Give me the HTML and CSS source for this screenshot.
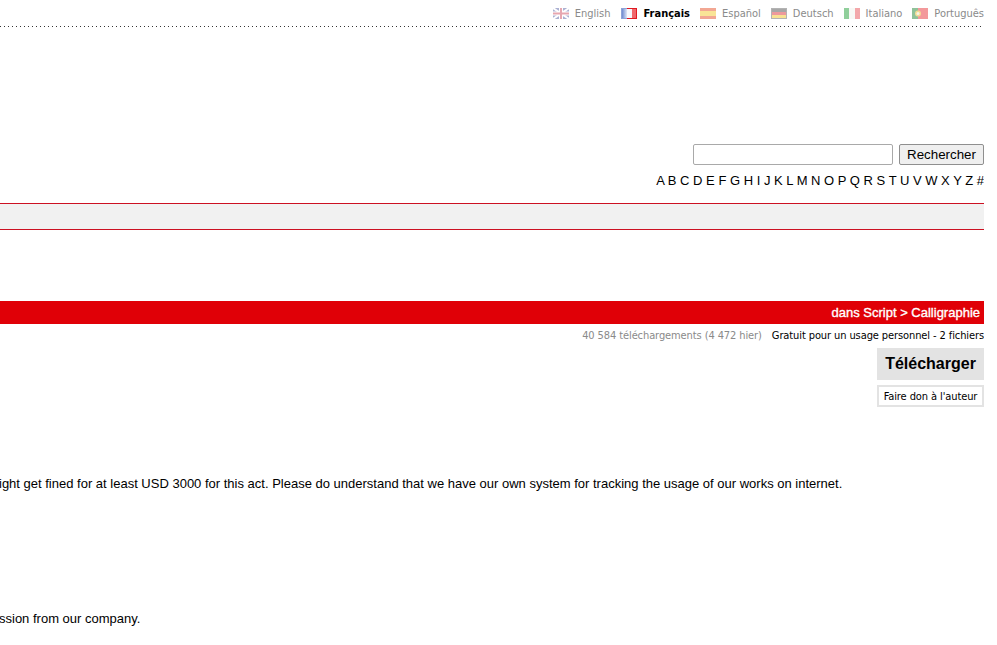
FILE: index.html
```html
<!DOCTYPE html>
<html lang="fr">
<head>
<meta charset="utf-8">
<title>Calligraphie</title>
<link rel="stylesheet" href="styles.css">
</head>
<body>
<div class="page">
  <nav class="langs">
    <a class="lang"><svg class="flag dim" viewBox="0 0 16 11"><rect width="16" height="11" fill="#8f97c4"/><path d="M0 0L16 11M16 0L0 11" stroke="#fff" stroke-width="2"/><path d="M8 0V11M0 5.500H16" stroke="#fff" stroke-width="4"/><path d="M8 0V11M0 5.500H16" stroke="#e08a96" stroke-width="2"/></svg>English</a>
    <a class="lang current"><svg class="flag" viewBox="0 0 16 11"><defs><linearGradient id="fr-blue" x1="0" x2="1" y1="0" y2="0"><stop offset="0" stop-color="#6f8ad0"/><stop offset="1" stop-color="#dfe6f6"/></linearGradient></defs><rect width="16" height="11" fill="#e01a22"/><rect width="6" height="11" fill="#8fa3d8"/><rect x="1" y="1" width="5" height="9" fill="url(#fr-blue)"/><rect x="6" y="1" width="5" height="9" fill="#f7f8fc"/><rect x="11" y="1" width="4" height="9" fill="#f0686c"/></svg>Français</a>
    <a class="lang"><svg class="flag dim" viewBox="0 0 16 11"><rect width="16" height="11" fill="#ee8a70"/><rect y="3" width="16" height="5" fill="#f8dc74"/></svg>Español</a>
    <a class="lang"><svg class="flag dim" viewBox="0 0 16 11"><rect width="16" height="11" fill="#9a9a9a"/><rect x="1" y="1" width="14" height="3" fill="#8a8a8a"/><rect x="1" y="4" width="14" height="3" fill="#e8787c"/><rect x="1" y="7" width="14" height="3" fill="#f6d86e"/></svg>Deutsch</a>
    <a class="lang"><svg class="flag dim" viewBox="0 0 16 11"><rect width="6" height="11" fill="#6cc07a"/><rect x="5" width="6" height="11" fill="#f6f6f2"/><rect x="11" width="5" height="11" fill="#f08a8e"/></svg>Italiano</a>
    <a class="lang"><svg class="flag dim" viewBox="0 0 16 11"><rect width="16" height="11" fill="#f0787a"/><rect width="6" height="11" fill="#6cae78"/><circle cx="6" cy="5.500" r="3" fill="#f0d070"/><circle cx="6" cy="5.500" r="1.500" fill="#f4f0e0"/></svg>Português</a>
  </nav>
  <div class="search">
    <input class="search-input" type="text" aria-label="Rechercher">
    <button class="search-button" type="button">Rechercher</button>
  </div>
  <div class="alpha">A B C D E F G H I J K L M N O P Q R S T U V W X Y Z #</div>
  <div class="band"></div>
  <div class="titlebar">dans Script &gt; Calligraphie</div>
  <div class="stats"><span class="count">40 584 téléchargements (4 472 hier)</span><span>Gratuit pour un usage personnel - 2 fichiers</span></div>
  <div class="actions">
    <a class="download">Télécharger</a>
    <a class="donate">Faire don à l'auteur</a>
  </div>
  <p class="note first">ight get fined for at least USD 3000 for this act. Please do understand that we have our own system for tracking the usage of our works on internet.</p>
  <p class="note second">ssion from our company.</p>
</div>
</body>
</html>
```
FILE: styles.css
```css
html, body { margin: 0; padding: 0; background: #fff; }
body { overflow: hidden; height: 645px; }
.page {
  width: 984px;
  height: 645px;
  overflow: hidden;
  display: flex;
  flex-direction: column;
  font-family: "Liberation Sans", Arial, sans-serif;
  color: #000;
}
.langs {
  display: flex;
  justify-content: flex-end;
  align-items: center;
  gap: 10px;
  height: 27px;
  padding-bottom: 1px;
  box-sizing: border-box;
  background: linear-gradient(to right, #333 1px, transparent 1px) left 26px / 4px 1px repeat-x;
  font-family: "DejaVu Sans Condensed", "Noto Sans", sans-serif;
  font-stretch: condensed;
  font-size: 11px;
  color: #8a8a8a;
}
.lang { display: flex; align-items: center; gap: 6px; }
.lang.current { color: #000; font-weight: 700; gap: 7px; }
.flag { width: 16px; height: 11px; flex: none; }
.flag.dim { opacity: .75; }
.search {
  display: flex;
  justify-content: flex-end;
  gap: 6px;
  margin-top: 117px;
  height: 21px;
}
.search-input {
  width: 200px;
  height: 21px;
  box-sizing: border-box;
  border: 1px solid #a9a9a9;
  border-radius: 2px;
  padding: 0;
  margin: 0;
  background: #fff;
}
.search-button {
  width: 85px;
  height: 21px;
  box-sizing: border-box;
  border: 1px solid #8f8f8f;
  border-radius: 2px;
  padding: 0;
  margin: 0;
  background: #efefef;
  font: 13.33px "Liberation Sans", Arial, sans-serif;
  color: #000;
}
.alpha {
  margin-top: 7px;
  text-align: right;
  font-size: 13px;
  line-height: 17px;
  white-space: nowrap;
}
.band {
  margin-top: 14px;
  height: 25px;
  background: #f1f1f1;
  border-top: 1px solid #cc1122;
  border-bottom: 1px solid #cc1122;
}
.titlebar {
  margin-top: 71px;
  height: 23px;
  line-height: 23px;
  background: #e00007;
  color: #fff;
  font-size: 13px;
  -webkit-text-stroke: .35px #fff;
  text-align: right;
  padding-right: 4px;
}
.stats {
  display: flex;
  justify-content: flex-end;
  gap: 10px;
  height: 24px;
  padding-bottom: 1px;
  box-sizing: border-box;
  align-items: center;
  font-family: "DejaVu Sans Condensed", "Noto Sans", sans-serif;
  font-stretch: condensed;
  font-size: 11px;
  letter-spacing: -.1px;
}
.count { color: #8a8a8a; }
.actions {
  display: flex;
  flex-direction: column;
  align-items: flex-end;
  gap: 5px;
}
.download {
  width: 107px;
  height: 32px;
  line-height: 32px;
  background: #e3e3e3;
  text-align: center;
  font-size: 16px;
  font-weight: 700;
}
.donate {
  width: 107px;
  height: 22px;
  line-height: 19px;
  box-sizing: border-box;
  border: 2px solid #e3e3e3;
  text-align: center;
  font-family: "DejaVu Sans Condensed", "Noto Sans", sans-serif;
  font-stretch: condensed;
  font-size: 11px;
  letter-spacing: -.1px;
}
.note {
  margin: 0 0 0 -1px;
  white-space: nowrap;
  font-size: 13px;
  line-height: 17px;
}
.note.first { margin-top: 68px; }
.note.second { margin-top: 118px; }
```
